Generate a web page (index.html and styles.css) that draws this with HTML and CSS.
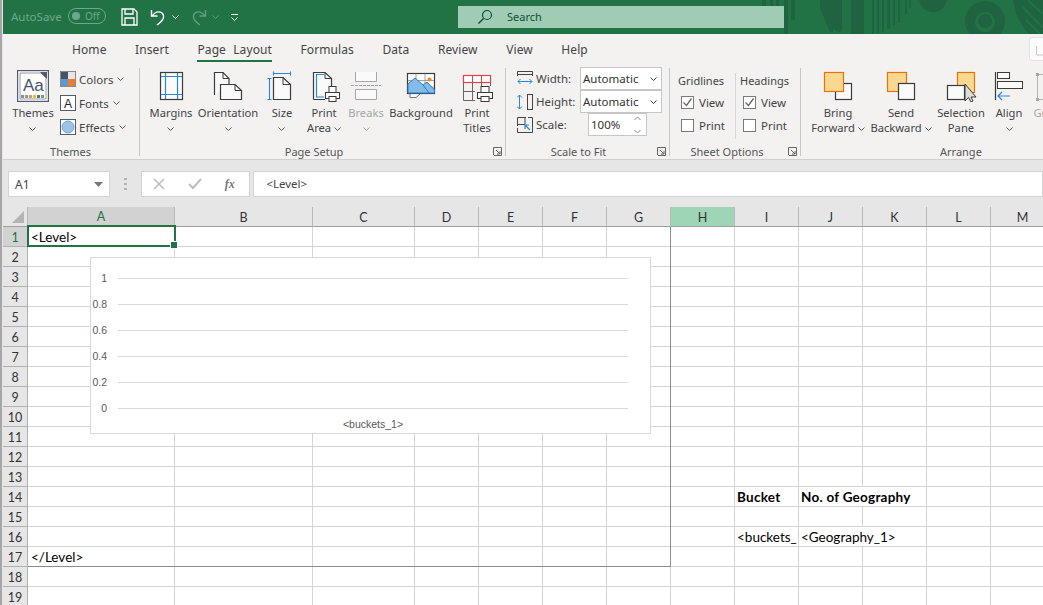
FILE: index.html
```html
<!DOCTYPE html>
<html lang="en">
<head>
<meta charset="utf-8">
<title>Excel - Page Layout</title>
<link rel="stylesheet" href="styles.css">
</head>
<body>
<div class="app">
  <header class="titlebar">
    <svg class="pattern" width="300" height="34" viewBox="0 0 300 34">
      <g fill="#1f6341">
        <rect x="2" y="0" width="4" height="6"/><rect x="10" y="0" width="3" height="6"/><rect x="16" y="0" width="3" height="6"/>
        <rect x="24" y="0" width="4" height="34"/><rect x="31" y="0" width="4" height="20"/>
        <path d="M60 0h8l5 12v20h-3l-10-24z"/>
        <path d="M68 0h14v31l-3 1-11-6z"/>
        <rect x="91" y="0" width="13" height="34"/>
        <rect x="112" y="0" width="2" height="34"/><rect x="117" y="0" width="2" height="33"/><rect x="122" y="0" width="2" height="32"/>
        <rect x="127" y="0" width="3" height="29"/><rect x="133" y="0" width="2" height="26"/><rect x="138" y="0" width="2" height="23"/>
        <rect x="145" y="0" width="2" height="14"/><rect x="149" y="0" width="2" height="8"/>
        <circle cx="173" cy="-2" r="14"/>
        <path fill-rule="evenodd" d="M225 1a20 20 0 1 0 .01 0zM225 12a10 10 0 1 1-.01 0z"/>
        <circle cx="225" cy="21" r="7"/>
        <path d="M253 0h30v34h-14c-8-8-14-20-16-34z"/>
      </g>
      <g stroke="#217346" stroke-width="2" fill="none">
        <path d="M268 0l15 14M262 6l21 22M266 20l14 14"/>
      </g>
    </svg>
    <span class="autosave">AutoSave</span>
    <span class="toggle"><i class="toggle-dot"></i><span>Off</span></span>
    <svg class="qat-save" width="17" height="18" viewBox="0 0 17 18"><path d="M1 1h12l3 3v13H1z" fill="none" stroke="#fff" stroke-width="1.3"/><path d="M4 1v5h8V1M4 17v-7h9v7" fill="none" stroke="#fff" stroke-width="1.3"/></svg>
    <svg class="qat-undo" width="17" height="18" viewBox="0 0 17 18"><path d="M1.5 2v6h6" fill="none" stroke="#fff" stroke-width="1.4"/><path d="M2 8c3-4 7-5 10-3 3 3 2 7-5 12" fill="none" stroke="#fff" stroke-width="1.4"/></svg>
    <svg class="chev qat-caret" width="7" height="4" viewBox="0 0 7 4"><path d="M.5.5l3 3 3-3" fill="none" stroke="#fff"/></svg>
    <svg class="qat-redo" width="17" height="18" viewBox="0 0 17 18"><path d="M15.5 2v6h-6" fill="none" stroke="#5f9f80" stroke-width="1.4"/><path d="M15 8c-3-4-7-5-10-3-3 3-2 7 5 12" fill="none" stroke="#5f9f80" stroke-width="1.4"/></svg>
    <svg class="chev qat-caret" width="7" height="4" viewBox="0 0 7 4"><path d="M.5.5l3 3 3-3" fill="none" stroke="#5f9f80"/></svg>
    <svg class="qat-more" width="9" height="8" viewBox="0 0 9 8"><path d="M1 .5h7M1.5 3.5l3 3 3-3" fill="none" stroke="#fff"/></svg>
    <div class="search">
      <svg width="16" height="16" viewBox="0 0 16 16"><circle cx="10" cy="6" r="4.5" fill="none" stroke="#0f5132" stroke-width="1.2"/><path d="M6.5 9.5L1.5 14.5" stroke="#0f5132" stroke-width="1.4"/></svg>
      <span class="search-text">Search</span>
    </div>
  </header>

  <nav class="tabs">
    <span class="tab">Home</span>
    <span class="tab">Insert</span>
    <span class="tab tab-active">Page Layout</span>
    <span class="tab">Formulas</span>
    <span class="tab">Data</span>
    <span class="tab">Review</span>
    <span class="tab">View</span>
    <span class="tab">Help</span>
    <span class="share"><svg width="10" height="12" viewBox="0 0 10 12"><path d="M1.5 1v9h8" fill="none" stroke="#c8c8c8"/></svg></span>
  </nav>

  <section class="ribbon">
    <div class="group g-themes">
      <div class="group-body">
        <div class="rbtn w46">
          <svg class="icon" width="32" height="32" viewBox="0 0 32 32">
            <rect x=".5" y=".5" width="31" height="31" fill="#fff" stroke="#505b6e" stroke-width="1.4"/>
            <path d="M3 3h21l5 5v21H3z" fill="#fff" stroke="#7b8493" stroke-width=".8"/>
            <path d="M23 2h7v7z" fill="#505b6e"/>
            <text x="6" y="21" class="aa-text">Aa</text>
            <rect x="4" y="25" width="3" height="3" fill="#5b9bd5"/><rect x="8" y="25" width="3" height="3" fill="#ed7d31"/><rect x="12" y="25" width="3" height="3" fill="#a5a5a5"/><rect x="16" y="25" width="3" height="3" fill="#ffc000"/><rect x="20" y="25" width="3" height="3" fill="#4472c4"/><rect x="24" y="25" width="3" height="3" fill="#70ad47"/>
          </svg>
          <span class="rlabel">Themes<br><svg class="chev" width="7" height="4" viewBox="0 0 7 4"><path d="M.5.5l3 3 3-3" fill="none" stroke="#555"/></svg></span>
        </div>
        <div class="smallcol">
          <div class="smallrow">
            <svg width="16" height="16" viewBox="0 0 16 16"><rect width="8" height="8" fill="#44546a"/><rect x="8" width="8" height="8" fill="#e7e6e6"/><rect y="8" width="8" height="8" fill="#5b9bd5"/><rect x="8" y="8" width="8" height="8" fill="#ed7d31"/><rect x=".5" y=".5" width="15" height="15" fill="none" stroke="#8a8a8a"/></svg>
            <span>Colors</span><svg class="chev" width="7" height="4" viewBox="0 0 7 4"><path d="M.5.5l3 3 3-3" fill="none" stroke="#555"/></svg>
          </div>
          <div class="smallrow">
            <svg width="16" height="16" viewBox="0 0 16 16"><rect x=".5" y=".5" width="15" height="15" fill="#fff" stroke="#505b6e"/><text x="4" y="13" class="a-text">A</text></svg>
            <span>Fonts</span><svg class="chev" width="7" height="4" viewBox="0 0 7 4"><path d="M.5.5l3 3 3-3" fill="none" stroke="#555"/></svg>
          </div>
          <div class="smallrow">
            <svg width="16" height="16" viewBox="0 0 16 16"><rect x=".5" y=".5" width="15" height="15" fill="#fff" stroke="#505b6e"/><circle cx="8" cy="8" r="6" fill="#9dc3e6" stroke="#6fa5d8"/></svg>
            <span>Effects</span><svg class="chev" width="7" height="4" viewBox="0 0 7 4"><path d="M.5.5l3 3 3-3" fill="none" stroke="#555"/></svg>
          </div>
        </div>
      </div>
      <div class="group-label">Themes</div>
    </div>

    <div class="group g-page">
      <div class="group-body">
        <div class="rbtn w56">
          <svg class="icon" width="32" height="32" viewBox="0 0 32 32"><rect x="5.5" y="2.5" width="22" height="27" fill="#fafafa" stroke="#3b3b3b" stroke-width="1.2"/><path d="M10.5 3v26M22.5 3v26M6 6.500h21M6 24.500h21" stroke="#2b88d8" stroke-width="1.2"/></svg>
          <span class="rlabel">Margins<br><svg class="chev" width="7" height="4" viewBox="0 0 7 4"><path d="M.5.5l3 3 3-3" fill="none" stroke="#555"/></svg></span>
        </div>
        <div class="rbtn w58">
          <svg class="icon" width="32" height="32" viewBox="0 0 32 32"><path d="M2.500 25V2.500H11L17 8.500V14" fill="#fafafa" stroke="#3b3b3b" stroke-width="1.2"/><path d="M11 2.500V8.500H17" fill="none" stroke="#3b3b3b"/><path d="M8.500 14.500H23L29.500 20.500V29.500H8.500Z" fill="#fafafa" stroke="#3b3b3b" stroke-width="1.2"/><path d="M23 14.500V20.500H29.500" fill="none" stroke="#3b3b3b"/></svg>
          <span class="rlabel">Orientation<br><svg class="chev" width="7" height="4" viewBox="0 0 7 4"><path d="M.5.5l3 3 3-3" fill="none" stroke="#555"/></svg></span>
        </div>
        <div class="rbtn w50">
          <svg class="icon" width="32" height="32" viewBox="0 0 32 32"><path d="M7.500 7.500H17L24.500 14.500V29.500H7.500Z" fill="#fafafa" stroke="#3b3b3b" stroke-width="1.2"/><path d="M17 7.500V14.500H24.500" fill="none" stroke="#3b3b3b"/><path d="M7.500 1.500v4M7.500 3.500h17M24.500 1.500v4M1.500 8.500h4M3.500 8.500v21M1.500 29.500h4" fill="none" stroke="#2b88d8" stroke-width="1.1"/></svg>
          <span class="rlabel">Size<br><svg class="chev" width="7" height="4" viewBox="0 0 7 4"><path d="M.5.5l3 3 3-3" fill="none" stroke="#555"/></svg></span>
        </div>
        <div class="rbtn w34">
          <svg class="icon" width="32" height="32" viewBox="0 0 32 32"><path d="M5.500 29.500V2.500H17L23.500 8.500V16M5.500 29.500H17" fill="#fafafa" stroke="#3b3b3b" stroke-width="1.2"/><path d="M17 2.500V8.500H23.500" fill="none" stroke="#3b3b3b"/><path d="M16 4.500H8.500V27H16" fill="none" stroke="#2b88d8" stroke-width="1.2"/><rect x="21" y="16.500" width="7" height="6" fill="#fff" stroke="#3b3b3b"/><rect x="17.500" y="22.500" width="14" height="6" fill="#fafafa" stroke="#3b3b3b"/><rect x="21" y="26.500" width="7" height="5" fill="#fff" stroke="#3b3b3b"/></svg>
          <span class="rlabel">Print<br>Area <svg class="chev" width="7" height="4" viewBox="0 0 7 4"><path d="M.5.5l3 3 3-3" fill="none" stroke="#555"/></svg></span>
        </div>
        <div class="rbtn w50 is-off">
          <svg class="icon" width="32" height="32" viewBox="0 0 32 32"><path d="M5.500 2V11.500H26.500V2M5.500 29.500V19.500H26.500V29.500Z" fill="#fafafa" stroke="#a6a6a6"/><path d="M1 15.500H31" stroke="#a6a6a6" stroke-dasharray="3 1"/></svg>
          <span class="rlabel">Breaks<br><svg class="chev" width="7" height="4" viewBox="0 0 7 4"><path d="M.5.5l3 3 3-3" fill="none" stroke="#a6a6a6"/></svg></span>
        </div>
        <div class="rbtn w60">
          <svg class="icon" width="32" height="32" viewBox="0 0 32 32"><path d="M5 24V27.500H11L15 24" fill="#fff" stroke="#777"/><rect x="2.500" y="3.500" width="27" height="20" fill="#fff" stroke="#3b3b3b" stroke-width="1.200"/><path d="M3 10.500H29M3 17H29M11 4V23M20 4V23" stroke="#a0a0a0"/><path d="M3 23V14L10 8L18 15L22 12L29.500 20V23Z" fill="#83bcea" stroke="#2b7cd3"/><path d="M18 15L24 23" fill="none" stroke="#2b7cd3"/><circle cx="24.500" cy="9.500" r="2" fill="#ed8b1f"/></svg>
          <span class="rlabel">Background</span>
        </div>
        <div class="rbtn w52">
          <svg class="icon" width="32" height="32" viewBox="0 0 32 32"><path d="M2.500 12.500V30.500H14M2.500 21.500H14M11.500 13V30" fill="none" stroke="#666"/><path d="M20.500 13v3M29.500 13v3" stroke="#666"/><rect x="2.500" y="5.500" width="27" height="7" fill="#fff" stroke="#e8404a" stroke-width="1.200"/><path d="M11.500 6V12M20.500 6V12" stroke="#e8404a"/><rect x="20" y="16.500" width="8" height="6" fill="#fff" stroke="#3b3b3b"/><rect x="16.500" y="22.500" width="15" height="6" fill="#fafafa" stroke="#3b3b3b"/><rect x="20" y="26.500" width="8" height="5" fill="#fff" stroke="#3b3b3b"/></svg>
          <span class="rlabel">Print<br>Titles</span>
        </div>
      </div>
      <div class="group-label">Page Setup</div>
      <svg class="launcher" width="9" height="9" viewBox="0 0 9 9"><path d="M.5 8V.5H8.500V8.500H1M3 3L7 7M7 4V7H4" fill="none" stroke="#666"/></svg>
    </div>

    <div class="group g-scale">
      <div class="group-body scale-body">
        <div class="scale-row">
          <svg width="16" height="16" viewBox="0 0 16 16"><path d="M.5 5V.5H15.500V5M.5 3.500H15.500" fill="none" stroke="#444"/><path d="M1 10.500H15M3.500 8L1 10.500L3.500 13M12.500 8L15 10.500L12.500 13" fill="none" stroke="#2b88d8"/></svg>
          <span class="scale-label">Width:</span>
          <span class="field field-wide">Automatic<svg class="chev" width="7" height="4" viewBox="0 0 7 4"><path d="M.5.5l3 3 3-3" fill="none" stroke="#444"/></svg></span>
        </div>
        <div class="scale-row">
          <svg width="16" height="16" viewBox="0 0 16 16"><path d="M2.500 1V15M0 3.500L2.500 1L5 3.500M0 12.500L2.500 15L5 12.500" fill="none" stroke="#2b88d8"/><rect x="10.500" y=".5" width="5" height="15" fill="none" stroke="#444"/></svg>
          <span class="scale-label">Height:</span>
          <span class="field field-wide">Automatic<svg class="chev" width="7" height="4" viewBox="0 0 7 4"><path d="M.5.5l3 3 3-3" fill="none" stroke="#444"/></svg></span>
        </div>
        <div class="scale-row">
          <svg width="16" height="16" viewBox="0 0 16 16"><path d="M.5 9V.5H9M11 .5H15.500V15.500H.5V11M.5 7.500H8V.5" fill="none" stroke="#444"/><path d="M13 13L8 8M8 12V8H12" fill="none" stroke="#2b88d8" stroke-width="1.200"/></svg>
          <span class="scale-label scale-label-long">Scale:</span>
          <span class="field field-spin">100%<svg width="7" height="18" viewBox="0 0 7 18"><path d="M.5 4l3-3 3 3M.5 14l3 3 3-3" fill="none" stroke="#888"/></svg></span>
        </div>
      </div>
      <div class="group-label">Scale to Fit</div>
      <svg class="launcher" width="9" height="9" viewBox="0 0 9 9"><path d="M.5 8V.5H8.500V8.500H1M3 3L7 7M7 4V7H4" fill="none" stroke="#666"/></svg>
    </div>

    <div class="group g-sheet">
      <div class="group-body">
        <div class="optcol optcol-grid">
          <div class="opt-title">Gridlines</div>
          <div class="opt-row"><span class="check"><svg width="11" height="11" viewBox="0 0 11 11"><path d="M1.500 5.500L4.500 8.500L9.500 1.500" fill="none" stroke="#666" stroke-width="1.300"/></svg></span>View</div>
          <div class="opt-row"><span class="check"></span>Print</div>
        </div>
        <div class="optcol">
          <div class="opt-title">Headings</div>
          <div class="opt-row"><span class="check"><svg width="11" height="11" viewBox="0 0 11 11"><path d="M1.500 5.500L4.500 8.500L9.500 1.500" fill="none" stroke="#666" stroke-width="1.300"/></svg></span>View</div>
          <div class="opt-row"><span class="check"></span>Print</div>
        </div>
      </div>
      <div class="group-label">Sheet Options</div>
      <svg class="launcher" width="9" height="9" viewBox="0 0 9 9"><path d="M.5 8V.5H8.500V8.500H1M3 3L7 7M7 4V7H4" fill="none" stroke="#666"/></svg>
    </div>

    <div class="group g-arrange">
      <div class="group-body">
        <div class="rbtn w60">
          <svg class="icon" width="32" height="32" viewBox="0 0 32 32"><rect x="13.500" y="13.500" width="16" height="16" fill="#fafafa" stroke="#3b3b3b" stroke-width="1.200"/><rect x="2.500" y="2.500" width="19" height="19" fill="#f9d98f" stroke="#e3730a" stroke-width="1.200"/></svg>
          <span class="rlabel">Bring<br>Forward <svg class="chev" width="7" height="4" viewBox="0 0 7 4"><path d="M.5.5l3 3 3-3" fill="none" stroke="#555"/></svg></span>
        </div>
        <div class="rbtn w66">
          <svg class="icon" width="32" height="32" viewBox="0 0 32 32"><rect x="2.500" y="2.500" width="19" height="19" fill="#f9d98f" stroke="#e3730a" stroke-width="1.200"/><rect x="13.500" y="13.500" width="16" height="16" fill="#fafafa" stroke="#3b3b3b" stroke-width="1.200"/></svg>
          <span class="rlabel">Send<br>Backward <svg class="chev" width="7" height="4" viewBox="0 0 7 4"><path d="M.5.5l3 3 3-3" fill="none" stroke="#555"/></svg></span>
        </div>
        <div class="rbtn w54">
          <svg class="icon" width="32" height="32" viewBox="0 0 32 32"><rect x="12.500" y="2.500" width="17" height="20" fill="#f9d98f" stroke="#e3730a" stroke-width="1.200"/><rect x="2.500" y="15.500" width="17" height="14" fill="#fafafa" stroke="#3b3b3b" stroke-width="1.200"/><path d="M20 14V31L23.500 27.500L26 32L28 31L26 27H31Z" fill="#dcdcdc" stroke="#3b3b3b"/></svg>
          <span class="rlabel">Selection<br>Pane</span>
        </div>
        <div class="rbtn w42">
          <svg class="icon" width="32" height="32" viewBox="0 0 32 32"><path d="M2.500 2V30" stroke="#3b3b3b" stroke-width="1.200"/><rect x="4.500" y="2.500" width="12" height="6" fill="#fafafa" stroke="#3b3b3b"/><rect x="4.500" y="11.500" width="25" height="7" fill="#fafafa" stroke="#3b3b3b"/><path d="M5 26H17M9 22L5 26L9 30" fill="none" stroke="#2b88d8" stroke-width="1.200"/></svg>
          <span class="rlabel">Align<br><svg class="chev" width="7" height="4" viewBox="0 0 7 4"><path d="M.5.5l3 3 3-3" fill="none" stroke="#555"/></svg></span>
        </div>
        <div class="rbtn w40 is-off">
          <svg class="icon" width="32" height="32" viewBox="0 0 32 32"><rect x="3.500" y="4.500" width="25" height="25" fill="none" stroke="#b5b5b5"/><rect x="2" y="3" width="3" height="3" fill="#a6a6a6"/><rect x="2" y="28" width="3" height="3" fill="#a6a6a6"/></svg>
          <span class="rlabel">Group</span>
        </div>
      </div>
      <div class="group-label group-label-arrange">Arrange</div>
    </div>
  </section>

  <section class="formula">
    <div class="namebox"><span>A1</span><svg width="9" height="5" viewBox="0 0 9 5"><path d="M0 0h9L4.500 5z" fill="#777"/></svg></div>
    <svg class="grip" width="3" height="12" viewBox="0 0 3 12"><path d="M0 0h3v2H0zM0 5h3v2H0zM0 10h3v2H0z" fill="#b4b4b4"/></svg>
    <div class="fx-box">
      <svg width="12" height="12" viewBox="0 0 12 12"><path d="M1 1l10 10M11 1L1 11" stroke="#bdbdbd" stroke-width="1.600"/></svg>
      <svg width="14" height="12" viewBox="0 0 14 12"><path d="M1 6l4 4 8-9" fill="none" stroke="#bdbdbd" stroke-width="2"/></svg>
      <span class="fx">fx</span>
    </div>
    <div class="fx-input">&lt;Level&gt;</div>
  </section>

  <section class="sheet">
    <table class="grid">
      <colgroup><col class="c-rh"><col class="c-a"><col class="c-b"><col class="c-c"><col span="10" class="c-n"></colgroup>
      <thead>
        <tr><th class="corner"><svg class="corner-tri" width="12" height="12" viewBox="0 0 12 12"><path d="M12 0V12H0Z" fill="#b4b4b4"/></svg></th><th class="is-active">A</th><th>B</th><th>C</th><th>D</th><th>E</th><th>F</th><th>G</th><th class="is-green">H</th><th>I</th><th>J</th><th>K</th><th>L</th><th>M</th></tr>
      </thead>
      <tbody>
        <tr><th class="is-active">1</th><td class="sel">&lt;Level&gt;<span class="sel-box"><i class="sel-handle"></i></span></td><td></td><td></td><td></td><td></td><td></td><td></td><td></td><td></td><td></td><td></td><td></td><td></td></tr>
        <tr><th>2</th><td></td><td></td><td></td><td></td><td></td><td></td><td></td><td></td><td></td><td></td><td></td><td></td><td></td></tr>
        <tr><th>3</th><td></td><td></td><td></td><td></td><td></td><td></td><td></td><td></td><td></td><td></td><td></td><td></td><td></td></tr>
        <tr><th>4</th><td></td><td></td><td></td><td></td><td></td><td></td><td></td><td></td><td></td><td></td><td></td><td></td><td></td></tr>
        <tr><th>5</th><td></td><td></td><td></td><td></td><td></td><td></td><td></td><td></td><td></td><td></td><td></td><td></td><td></td></tr>
        <tr><th>6</th><td></td><td></td><td></td><td></td><td></td><td></td><td></td><td></td><td></td><td></td><td></td><td></td><td></td></tr>
        <tr><th>7</th><td></td><td></td><td></td><td></td><td></td><td></td><td></td><td></td><td></td><td></td><td></td><td></td><td></td></tr>
        <tr><th>8</th><td></td><td></td><td></td><td></td><td></td><td></td><td></td><td></td><td></td><td></td><td></td><td></td><td></td></tr>
        <tr><th>9</th><td></td><td></td><td></td><td></td><td></td><td></td><td></td><td></td><td></td><td></td><td></td><td></td><td></td></tr>
        <tr><th>10</th><td></td><td></td><td></td><td></td><td></td><td></td><td></td><td></td><td></td><td></td><td></td><td></td><td></td></tr>
        <tr><th>11</th><td></td><td></td><td></td><td></td><td></td><td></td><td></td><td></td><td></td><td></td><td></td><td></td><td></td></tr>
        <tr><th>12</th><td></td><td></td><td></td><td></td><td></td><td></td><td></td><td></td><td></td><td></td><td></td><td></td><td></td></tr>
        <tr><th>13</th><td></td><td></td><td></td><td></td><td></td><td></td><td></td><td></td><td></td><td></td><td></td><td></td><td></td></tr>
        <tr><th>14</th><td></td><td></td><td></td><td></td><td></td><td></td><td></td><td></td><td class="bold tight">Bucket</td><td colspan="2" class="bold tight">No. of Geography</td><td></td><td></td></tr>
        <tr><th>15</th><td></td><td></td><td></td><td></td><td></td><td></td><td></td><td></td><td></td><td></td><td></td><td></td><td></td></tr>
        <tr><th>16</th><td></td><td></td><td></td><td></td><td></td><td></td><td></td><td></td><td class="tight">&lt;buckets_1&gt;</td><td colspan="2" class="tight">&lt;Geography_1&gt;</td><td></td><td></td></tr>
        <tr><th>17</th><td>&lt;/Level&gt;</td><td></td><td></td><td></td><td></td><td></td><td></td><td></td><td></td><td></td><td></td><td></td><td></td></tr>
        <tr><th>18</th><td></td><td></td><td></td><td></td><td></td><td></td><td></td><td></td><td></td><td></td><td></td><td></td><td></td></tr>
        <tr><th>19</th><td></td><td></td><td></td><td></td><td></td><td></td><td></td><td></td><td></td><td></td><td></td><td></td><td></td></tr>
      </tbody>
    </table>
    <div class="print-area"></div>
    <div class="chart">
      <div class="axis-row"><span class="axis-num">1</span><i class="axis-line"></i></div>
      <div class="axis-row"><span class="axis-num">0.8</span><i class="axis-line"></i></div>
      <div class="axis-row"><span class="axis-num">0.6</span><i class="axis-line"></i></div>
      <div class="axis-row"><span class="axis-num">0.4</span><i class="axis-line"></i></div>
      <div class="axis-row"><span class="axis-num">0.2</span><i class="axis-line"></i></div>
      <div class="axis-row"><span class="axis-num">0</span><i class="axis-line"></i></div>
      <div class="axis-cat">&lt;buckets_1&gt;</div>
    </div>
  </section>
</div>
</body>
</html>
```

FILE: styles.css
```css
* { box-sizing: border-box; }
html, body { margin: 0; padding: 0; }
body {
  width: 1043px;
  height: 605px;
  overflow: hidden;
  border-left: 2px solid #a6a6a6;
  background: #e6e6e6;
  font-family: "Noto Sans", "Open Sans", sans-serif;
  font-size: 11.5px;
  color: #444;
}
.app {
  width: 1041px;
  height: 605px;
  padding-left: 1px;
  display: flex;
  flex-direction: column;
  overflow: hidden;
}

/* Title bar */
.titlebar {
  flex: none;
  position: relative;
  height: 34px;
  background: #217346;
  display: flex;
  align-items: center;
  padding-left: 8px;
  overflow: hidden;
}
.pattern { position: absolute; left: 757px; top: 0; }
.autosave { color: #6da88a; width: 57px; font-size: 11.5px; margin-top: -1px; }
.toggle {
  width: 38px;
  height: 16px;
  margin-top: -2px;
  border: 1px solid #6da88a;
  border-radius: 8px;
  display: flex;
  align-items: center;
  gap: 5px;
  padding-left: 3px;
  color: #6da88a;
  font-size: 10px;
}
.toggle-dot { width: 8px; height: 8px; border-radius: 50%; background: #6da88a; }
.qat-save { margin-left: 15px; }
.qat-undo { margin-left: 12px; }
.qat-caret { margin-left: 5px; }
.qat-redo { margin-left: 11px; }
.qat-more { margin-left: 11px; margin-top: 1px; }
.search {
  position: relative;
  width: 326px;
  height: 22px;
  margin-left: 219px;
  background: #a0ccb4;
  display: flex;
  align-items: center;
  padding-left: 19px;
  gap: 14px;
  color: #0f5132;
  font-size: 11px;
}
.search-text { margin-top: -2px; }

/* Tabs */
.tabs {
  flex: none;
  height: 30px;
  background: #f3f2f1;
  display: flex;
  padding-left: 69px;
  gap: 28.500px;
  overflow: hidden;
}
.tab {
  height: 28px;
  line-height: 31px;
  font-size: 12px;
  letter-spacing: .1px;
  color: #444;
  white-space: nowrap;
}
.tab-active { border-bottom: 2px solid #217346; word-spacing: 4px; }
.share {
  margin-left: auto;
  margin-top: 3px;
  margin-right: -10px;
  width: 24px;
  height: 24px;
  background: #fbfbfb;
  border: 1px solid #e3e3e3;
  border-radius: 3px;
  padding: 7px 0 0 5px;
}

/* Ribbon */
.ribbon {
  flex: none;
  height: 96px;
  background: #f3f2f1;
  border-bottom: 1px solid #d2d0ce;
  padding-top: 4px;
  display: flex;
  overflow: hidden;
}
.group {
  position: relative;
  flex: none;
  height: 88px;
  display: flex;
  flex-direction: column;
  border-right: 1px solid #c8c6c4;
}
.group-body { flex: 1; display: flex; min-height: 0; }
.group-label {
  height: 14px;
  line-height: 14px;
  margin-bottom: -3px;
  text-align: center;
  font-size: 11px;
  color: #555;
}
.launcher { position: absolute; right: 3px; bottom: 0; }
.g-themes { width: 137px; padding-left: 7px; }
.g-themes .group-label { padding-right: 8px; }
.g-page { width: 366px; padding-left: 3px; }
.g-page .group-label { padding-right: 20px; }
.g-scale { width: 164px; }
.g-scale .group-label { padding-right: 18px; }
.g-sheet { width: 131px; }
.g-sheet .group-label { padding-right: 16px; }
.g-arrange { width: 300px; padding-left: 7px; border-right: 0; }
.group-label-arrange { text-align: left; padding-left: 132px; }

.rbtn {
  flex: none;
  display: flex;
  flex-direction: column;
  align-items: center;
  padding-top: 2px;
  text-align: center;
}
.rbtn .icon { display: block; flex: none; }
.rlabel {
  display: block;
  margin-top: 3px;
  line-height: 15px;
  white-space: nowrap;
  font-size: 11.200px;
  color: #444;
}
.is-off .rlabel { color: #a6a6a6; }
.chev { vertical-align: 1px; }
.w34 { width: 34px; } .w40 { width: 40px; } .w42 { width: 42px; } .w46 { width: 46px; }
.w50 { width: 50px; } .w52 { width: 52px; } .w54 { width: 54px; } .w56 { width: 56px; }
.w58 { width: 58px; } .w60 { width: 60px; } .w66 { width: 66px; }
.aa-text { font: 17px "Liberation Sans", sans-serif; fill: #44546a; }
.a-text { font: 12px "Liberation Sans", sans-serif; fill: #222; }

.smallcol { margin: -1px 0 0 4px; }
.smallrow { height: 24px; display: flex; align-items: center; gap: 3px; font-size: 11.5px; color: #444; }
.smallrow .chev { margin-left: 1px; }

.scale-body { flex-direction: column; margin-top: -1px; padding-left: 11px; }
.scale-row { height: 23px; display: flex; align-items: center; flex: none; }
.scale-label { width: 47px; padding-left: 3px; font-size: 11.5px; }
.scale-label-long { width: 55px; }
.field {
  height: 23px;
  background: #fff;
  border: 1px solid #c8c6c4;
  display: flex;
  align-items: center;
  justify-content: space-between;
  padding: 0 4px 0 2px;
  font-size: 11.5px;
  color: #333;
}
.field-wide { width: 82px; }
.field-spin { width: 59px; padding: 0 5px 0 2px; }

.optcol { height: 66px; margin-top: 5px; padding-left: 7px; }
.optcol-grid {
  width: 66px;
  padding-left: 8px;
  border-right: 1px solid #d8d6d4;
}
.optcol:not(.optcol-grid) { padding-left: 4px; }
.opt-title { height: 18px; line-height: 16px; font-size: 11px; }
.opt-row { height: 23px; display: flex; align-items: center; gap: 5px; padding-left: 3px; font-size: 11.5px; }
.check {
  width: 13px;
  height: 13px;
  background: #fff;
  border: 1px solid #7a7a7a;
  display: flex;
  align-items: center;
  justify-content: center;
}

/* Formula bar */
.formula {
  flex: none;
  height: 47px;
  padding: 11px 0 10px 5px;
  background: #e6e6e6;
  display: flex;
  align-items: stretch;
}
.namebox {
  width: 102px;
  background: #fff;
  border: 1px solid #d4d4d4;
  display: flex;
  align-items: center;
  justify-content: space-between;
  padding: 0 6px;
  font-size: 12px;
}
.grip { align-self: center; margin-left: 14px; }
.fx-box {
  width: 110px;
  margin-left: 14px;
  background: #fff;
  border: 1px solid #d4d4d4;
  display: flex;
  align-items: center;
  gap: 23px;
  padding-left: 11px;
}
.fx { font: italic bold 12px "Liberation Serif", serif; color: #777; }
.fx-input {
  width: 792px;
  margin-left: 3px;
  background: #fff;
  border: 1px solid #d4d4d4;
  padding-left: 12px;
  line-height: 24px;
  font-size: 11.5px;
}

/* Sheet */
.sheet { position: relative; flex: 1; overflow: hidden; background: #fff; }
.grid {
  table-layout: fixed;
  border-collapse: separate;
  border-spacing: 0;
  width: 1052px;
  font-family: "Lato", "Liberation Sans", sans-serif;
  font-size: 13.5px;
  color: #000;
}
.c-rh { width: 25px; } .c-a { width: 147px; } .c-b { width: 138px; } .c-c { width: 102px; } .c-n { width: 64px; }
.grid th, .grid td { height: 20px; padding: 0; overflow: hidden; white-space: nowrap; }
.grid td { padding: 1px 0 0 3px; border-right: 1px solid #d4d4d4; border-bottom: 1px solid #d4d4d4; line-height: 18px; }
.grid td.tight { padding-left: 2px; }
.grid .bold { font-weight: 700; letter-spacing: .25px; }
.grid th {
  background: #e6e6e6;
  border-right: 1px solid #b1b1b1;
  border-bottom: 1px solid #b1b1b1;
  padding-top: 1px;
  font-weight: 400;
  font-size: 12.500px;
  color: #333;
  text-align: center;
}
.grid thead th { border-bottom: 1px solid #9f9f9f; border-right: 1px solid #b8b8b8; }
.grid .corner { text-align: right; vertical-align: bottom; padding: 0 3px 3px 0; }
.corner-tri { display: block; margin-left: auto; }
.grid th.is-active { background: #d2d2d2; color: #217346; }
.grid thead th.is-active { border-bottom: 2px solid #217346; }
.grid th.is-green { background: #9fd5b7; }
.grid td.sel { position: relative; overflow: visible; }
.sel-box {
  position: absolute;
  left: -1px;
  top: -2px;
  width: 149px;
  height: 22px;
  border: 2px solid #217346;
}
.sel-handle {
  position: absolute;
  right: -3px;
  bottom: -3px;
  width: 6px;
  height: 6px;
  background: #217346;
  outline: 1px solid #fff;
}
.print-area {
  position: absolute;
  left: 25px;
  top: 20px;
  width: 643px;
  height: 340px;
  border-right: 1px solid #8c8c8c;
  border-bottom: 1px solid #8c8c8c;
  pointer-events: none;
}
.chart {
  position: absolute;
  left: 87px;
  top: 50px;
  width: 561px;
  height: 177px;
  background: #fff;
  border: 1px solid #d9d9d9;
  padding: 7px 22px 0 1px;
  font-family: "Liberation Sans", sans-serif;
  font-size: 10.5px;
  color: #595959;
}
.axis-row { height: 26px; display: flex; align-items: center; }
.axis-num { width: 15px; margin-right: 11px; text-align: right; }
.axis-line { flex: 1; height: 1px; background: #d9d9d9; }
.axis-cat { margin: -3px 0 0 26px; height: 12px; line-height: 12px; text-align: center; }
```
